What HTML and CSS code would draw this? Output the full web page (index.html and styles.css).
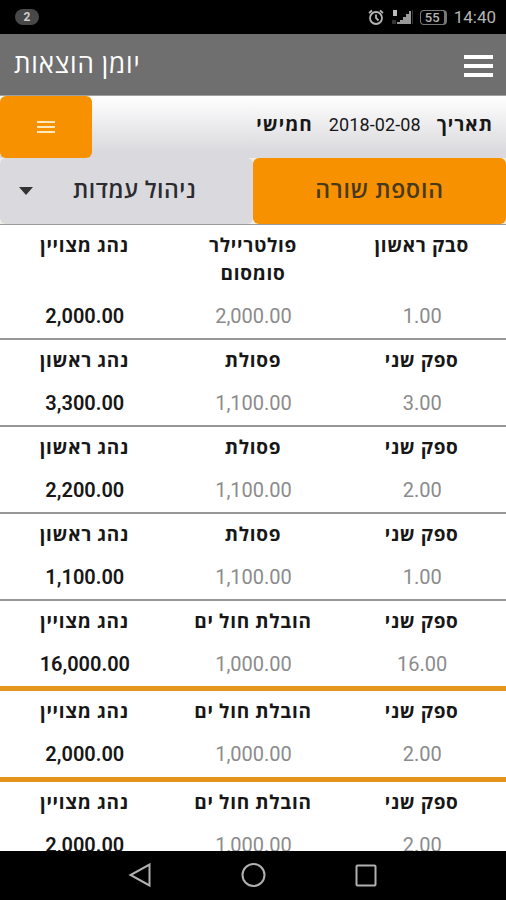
FILE: index.html
```
<!DOCTYPE html>
<html lang="he">
<head>
<meta charset="utf-8" />
<title>יומן הוצאות</title>
<link rel="stylesheet" href="styles.css">
</head>
<body>
	<div id="wrap">
		<div class="status">
			<span class="notice">2</span>
			<div class="statusIcons">
				<svg class="alarm" width="16" height="17" viewBox="0 0 16 17">
					<circle cx="8" cy="9" r="6" />
					<path d="M1 4 L4 1.5 M15 4 L12 1.5 M8 5.5 V9 L10.5 11.5" />
				</svg>
				<svg class="signal" width="23" height="17" viewBox="0 0 23 17">
					<path fill="#bbb" d="M2 1h4v6H2z" />
					<path fill="#333" d="M1 11h4v4H1zM21 1h1v14h-1z" />
					<path fill="#999" d="M6 13h3v2H6zM9 11h3v4H9zM12 8h3v7h-3zM15 5h3v10h-3zM18 2h2v13h-2z" />
				</svg>
				<span class="battery">55</span>
				<span class="clock">14:40</span>
			</div>
		</div>

		<div class="header">
			<h1>יומן הוצאות</h1>
			<div class="menu"><i></i><i></i><i></i></div>
		</div>

		<div class="dateBar">
			<a class="listBtn" href="javascript:;"><i></i><i></i><i></i></a>
			<p dir="rtl"><b>תאריך</b><span>2018-02-08</span><b>חמישי</b></p>
		</div>

		<div class="tools">
			<a class="select" href="javascript:;"><i></i><span>ניהול עמדות</span></a>
			<a class="add" href="javascript:;">הוספת שורה</a>
		</div>

		<ul id="list" dir="rtl">
			<li>
				<div><h3>סבק ראשון</h3><p>1.00</p></div>
				<div><h3>פולטריילר<br />סומסום</h3><p>2,000.00</p></div>
				<div><h3>נהג מצויין</h3><p class="total">2,000.00</p></div>
			</li>
			<li>
				<div><h3>ספק שני</h3><p>3.00</p></div>
				<div><h3>פסולת</h3><p>1,100.00</p></div>
				<div><h3>נהג ראשון</h3><p class="total">3,300.00</p></div>
			</li>
			<li>
				<div><h3>ספק שני</h3><p>2.00</p></div>
				<div><h3>פסולת</h3><p>1,100.00</p></div>
				<div><h3>נהג ראשון</h3><p class="total">2,200.00</p></div>
			</li>
			<li>
				<div><h3>ספק שני</h3><p>1.00</p></div>
				<div><h3>פסולת</h3><p>1,100.00</p></div>
				<div><h3>נהג ראשון</h3><p class="total">1,100.00</p></div>
			</li>
			<li class="mark">
				<div><h3>ספק שני</h3><p>16.00</p></div>
				<div><h3>הובלת חול ים</h3><p>1,000.00</p></div>
				<div><h3>נהג מצויין</h3><p class="total">16,000.00</p></div>
			</li>
			<li class="mark">
				<div><h3>ספק שני</h3><p>2.00</p></div>
				<div><h3>הובלת חול ים</h3><p>1,000.00</p></div>
				<div><h3>נהג מצויין</h3><p class="total">2,000.00</p></div>
			</li>
			<li>
				<div><h3>ספק שני</h3><p>2.00</p></div>
				<div><h3>הובלת חול ים</h3><p>1,000.00</p></div>
				<div><h3>נהג מצויין</h3><p class="total">2,000.00</p></div>
			</li>
		</ul>

		<div class="nav">
			<svg width="24" height="26" viewBox="0 0 24 26"><path d="M21.5 1.5 V22.5 L2.5 12 Z" /></svg>
			<svg width="26" height="26" viewBox="0 0 26 26"><circle cx="13.5" cy="12" r="11" /></svg>
			<svg width="24" height="26" viewBox="0 0 24 26"><rect x="2.5" y="2.5" width="19" height="20" rx="1" /></svg>
		</div>
	</div>
</body>
</html>
```

FILE: styles.css
```
body, h1, h3, p, ul{margin:0; padding:0;}
li{list-style:none;}
a{text-decoration:none;}
i{display:block;}

body {font-family: Roboto, "Open Sans", sans-serif; background:#fff; color:#171717;}
#wrap {width:506px; height:900px; display:flex; flex-direction:column; overflow:hidden;}

.status {height:34px; flex:none; background:#000; display:flex; align-items:center; justify-content:space-between; padding:0 10px 0 15px;}
.notice {width:24px; height:16px; line-height:16px; border-radius:8px; background:#484848; color:#ccc; font-size:12px; font-weight:bold; text-align:center;}
.statusIcons {display:flex; align-items:center; color:#b5b5b5;}
.alarm {fill:none; stroke:#b5b5b5; stroke-width:1.8; margin-right:7px;}
.signal {margin-right:6px;}
.battery {box-sizing:border-box; width:27px; height:15px; line-height:13px; border:1.5px solid #777; border-right-width:3px; border-radius:4px; font-size:13px; font-weight:500; text-align:center; margin-right:7px;}
.clock {font-size:17px; line-height:34px;}

.header {height:62px; flex:none; box-sizing:border-box; background:#6f6f6f; border-bottom:1px solid #a0a0a0; display:flex; align-items:center; justify-content:space-between; padding:0 13px 0 14px;}
.header h1 {font-size:26px; line-height:61px; letter-spacing:.8px; font-weight:normal; color:#fff;}
.menu {width:29px; display:flex; flex-direction:column; gap:5px; padding-top:2px;}
.menu i {height:4px; background:#fff;}

.dateBar {height:62px; flex:none; display:flex; justify-content:space-between; background:linear-gradient(#fff, #dadade 90%);}
.listBtn {width:92px; height:62px; border-radius:6px; background:#f79100; display:flex; flex-direction:column; align-items:center; justify-content:center; gap:3px;}
.listBtn i {width:18px; height:2px; background:#ffe9bd;}
.dateBar p {display:flex; gap:16px; padding-right:13px; line-height:58px; font-size:18px;}
.dateBar b {font-size:19px; letter-spacing:1px; font-weight:700;}
.dateBar span {letter-spacing:.1px;}

.tools {height:66px; flex:none; display:flex; font-size:23px; line-height:66px; background:#f1eee8;}
.tools a {border-radius:6px; text-align:center; color:#2b2b30; font-weight:600; letter-spacing:.5px;}
.select {width:253px; background:#dadade; display:flex; align-items:center;}
.select i {border:7px solid transparent; border-top:8px solid #333; border-bottom:0; margin-left:19px;}
.select span {margin-left:40px;}
.add {flex:1; background:#f79100;}
.tools .add {color:#46391c; letter-spacing:.8px;}

#list {flex:1; min-height:0; overflow:hidden; border-top:1px solid #999;}
#list li {display:grid; grid-template-columns:repeat(3, 1fr); padding:7px 0 8.1px; border-bottom:2.4px solid #979797; text-align:center;}
#list li div {display:flex; flex-direction:column; justify-content:space-between; gap:14px;}
#list h3 {font-size:19px; line-height:28px; letter-spacing:.7px; font-weight:700;}
#list p {font-size:20px; line-height:28px; color:#8b8b8b; padding-left:1px;}
#list .total {color:#171717; font-weight:600;}
#list .mark {border-bottom:5px solid #e5941c;}

.nav {height:49px; flex:none; background:#000; display:flex; align-items:center; justify-content:center; gap:88px;}
.nav svg {fill:none; stroke:#b0b0b0; stroke-width:2;}
```
